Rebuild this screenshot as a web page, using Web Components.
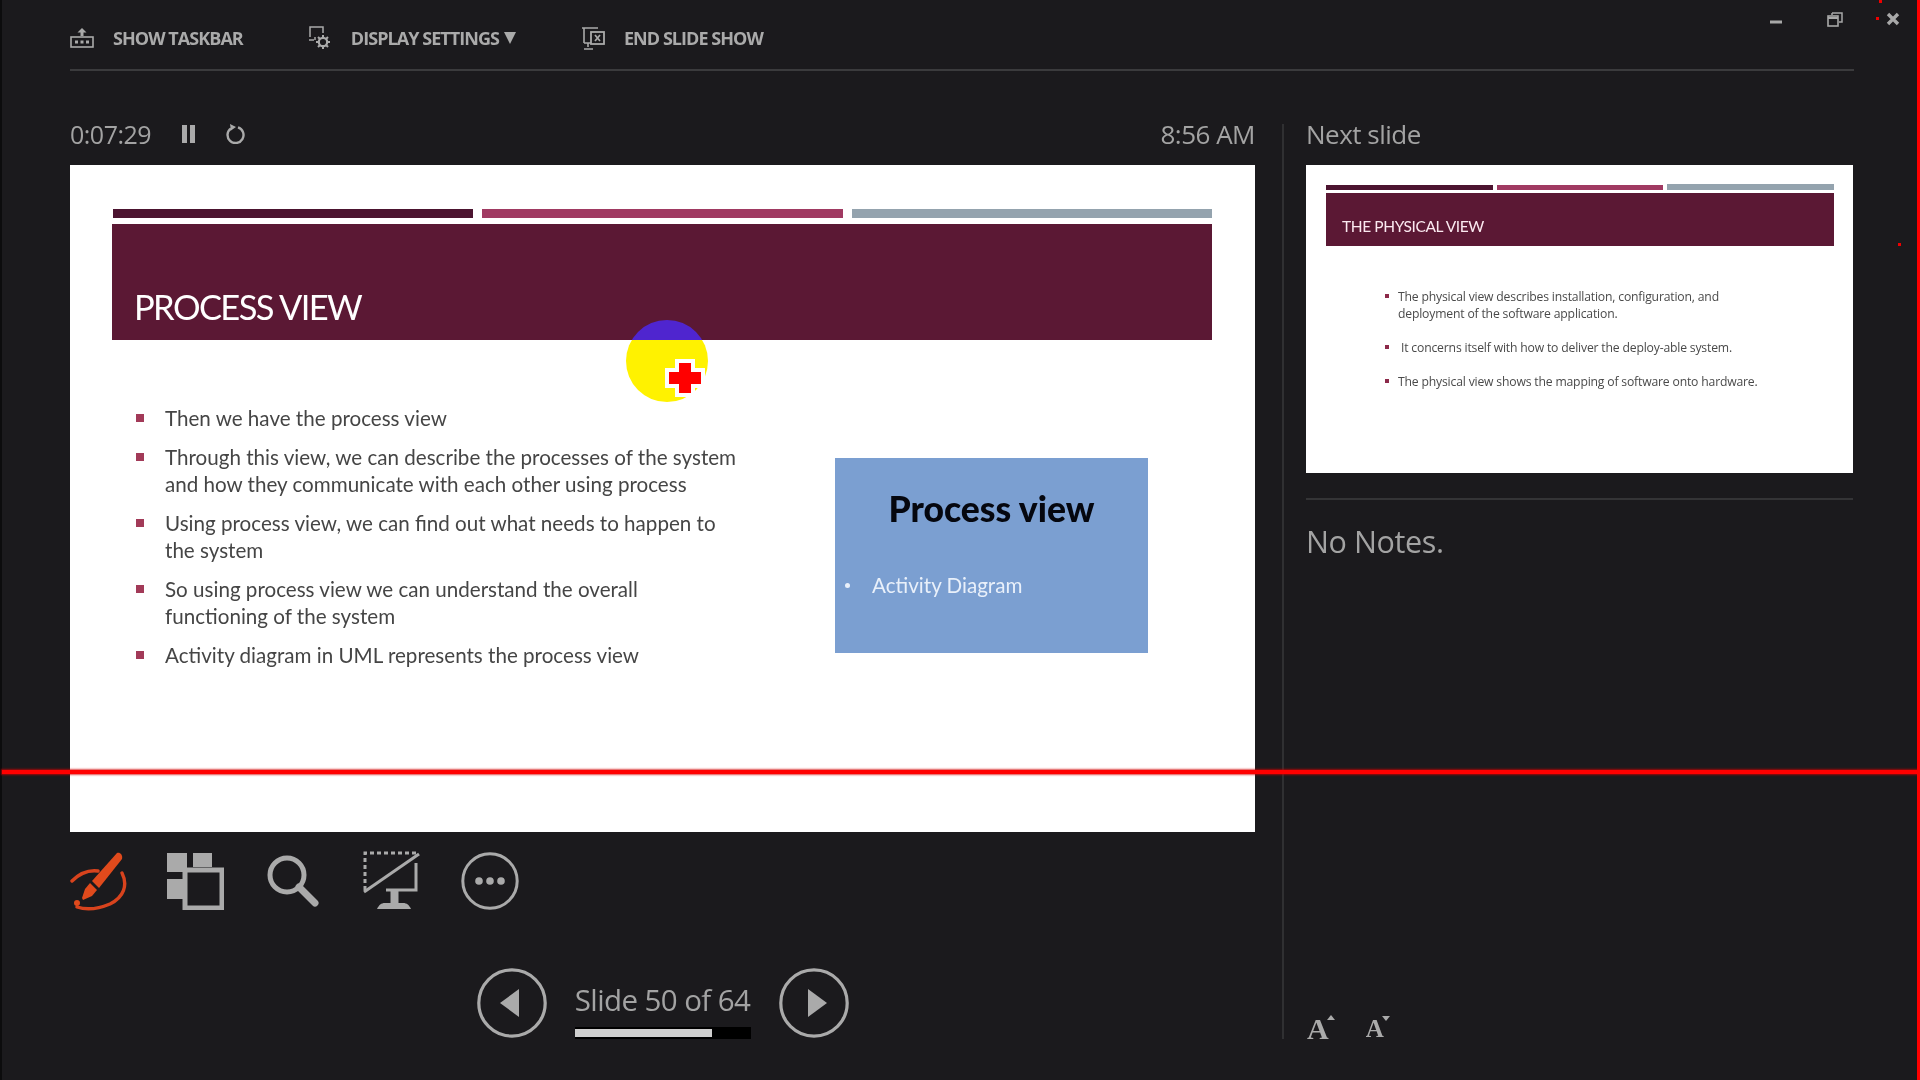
<!DOCTYPE html>
<html>
<head>
<meta charset="utf-8">
<title>Presenter view</title>
<style>
html,body{margin:0;padding:0;background:#1b1a1d;}
body{width:1920px;height:1080px;overflow:hidden;font-family:"Open Sans","Liberation Sans",sans-serif;}
</style>
</head>
<body>
<presenter-app></presenter-app>

<script>
const ICONS = {
    taskbar:`<svg width="24" height="20" viewBox="0 0 24 20" fill="none" stroke="#aaa"><path d="M12 0l-4.5 4.5h9z" fill="#aaa" stroke="none"/><rect x="10.5" y="4" width="3" height="4" fill="#aaa" stroke="none"/><rect x="1" y="9" width="22" height="10" stroke-width="1.6"/><path d="M5 14h3M10.5 14h3M16 14h3" stroke-width="3"/></svg>`,
    display:`<svg width="24" height="24" viewBox="0 0 24 24" fill="none" stroke="#aaa" stroke-width="1.5"><path d="M2 11V1h13v6M1 14h5"/><path d="M7 11v3"/><circle cx="15" cy="16" r="4.2" stroke-width="2.2"/><path d="M15 9v3M15 20v3M8 16h3M19 16h3M10 11l2 2M18 19l2 2M20 11l-2 2M12 19l-2 2" stroke-width="2"/></svg>`,
    end:`<svg width="24" height="24" viewBox="0 0 24 24" fill="none" stroke="#aaa" stroke-width="1.6"><path d="M1 2h16M3 2v15M10 17H3M7 17v4M3 23h9"/><rect x="10" y="6" width="13" height="12" fill="#1b1a1d" stroke-width="1.8"/><path d="M14 9l5 6M19 9l-5 6" stroke-width="1.7"/></svg>`,
    pen:`<svg width="58" height="60" viewBox="0 0 58 60" fill="none"><path d="M2 30c8-8 18-11 26-10M52 22c6 12 2 24-12 31-12 5-24 6-33 3" stroke="#d8431d" stroke-width="3.4" stroke-linecap="round"/><path d="M47 2c3-1 6 2 5 6L29 37l-7-7z" fill="#e04a1c"/><path d="M20 32l7 7-5 6-9 4-1-2 3-9z" fill="#e04a1c"/><circle cx="7" cy="52" r="3" fill="#e04a1c"/></svg>`,
    grid:`<svg width="58" height="58" viewBox="0 0 58 58"><rect x="1" y="1" width="20" height="19" fill="#aaa"/><rect x="27" y="1" width="19" height="14" fill="#aaa"/><rect x="1" y="27" width="20" height="20" fill="#aaa"/><rect x="19" y="18" width="37" height="38" fill="#1b1a1d" stroke="#aaa" stroke-width="5"/></svg>`,
    search:`<svg width="54" height="54" viewBox="0 0 54 54" fill="none" stroke="#aaa"><circle cx="21" cy="21" r="17" stroke-width="5"/><path d="M33 33l16 16" stroke-width="7" stroke-linecap="round"/></svg>`,
    screen:`<svg width="60" height="60" viewBox="0 0 60 60" fill="none" stroke="#aaa"><path d="M3 39V2h52" stroke-width="3" stroke-dasharray="4 3"/><path d="M2 41L57 3" stroke-width="3"/><path d="M54 12v27H24" stroke-width="3"/><path d="M29 40h7v12h-7z" fill="#aaa"/><path d="M15 58c2-4 4-6 8-6h18c4 0 6 2 8 6z" fill="#aaa" stroke="none"/></svg>`,
    more:`<svg width="58" height="58" viewBox="0 0 58 58" fill="none"><circle cx="29" cy="29" r="27.2" stroke="#aaa" stroke-width="3"/><circle cx="18" cy="29" r="3.8" fill="#aaa"/><circle cx="29" cy="29" r="3.8" fill="#aaa"/><circle cx="40" cy="29" r="3.8" fill="#aaa"/></svg>`,
    prev:`<svg width="72" height="72" viewBox="0 0 72 72" fill="none"><circle cx="36" cy="36" r="33.2" stroke="#aaa" stroke-width="3.2"/><path d="M43 22v28L24 36z" fill="#aaa"/></svg>`,
    next:`<svg width="72" height="72" viewBox="0 0 72 72" fill="none"><circle cx="36" cy="36" r="33.2" stroke="#aaa" stroke-width="3.2"/><path d="M30 22v28l19-14z" fill="#aaa"/></svg>`,
    pause:`<svg width="14" height="18" viewBox="0 0 14 18"><rect x="0" y="0" width="5" height="18" fill="#aaa"/><rect x="8" y="0" width="5" height="18" fill="#aaa"/></svg>`,
    refresh:`<svg width="20" height="20" viewBox="0 0 20 20" fill="none"><path d="M6 4.4A8 8 0 1 0 13 3.4" stroke="#aaa" stroke-width="2.4"/><path d="M5 0l1 6.5 5-3.5z" fill="#aaa"/></svg>`
};

// toolbar entry: icon + caps label
class ToolItem extends HTMLElement {
    constructor() {
        super();
        const shadowRoot = this.attachShadow({ mode: 'open' });
        shadowRoot.innerHTML = `
        <style>
        :host{
            display:inline-flex;
            align-items:center;
            gap:19px;
            color:#aaa;
            font:700 18px "Open Sans",sans-serif;
            letter-spacing:-.95px;
            white-space:nowrap;
        }
        i{display:flex;width:24px;}
        .caret{width:0;height:0;border:6.5px solid transparent;border-top:12px solid #aaa;border-bottom:0;margin-left:-14px;}
        </style>
        <i>${ICONS[this.getAttribute('icon')]}</i><slot></slot>${this.hasAttribute('caret')?'<span class="caret"></span>':''}
        `
    }
}

class BigIcon extends HTMLElement {
    constructor() {
        super();
        const shadowRoot = this.attachShadow({ mode: 'open' });
        shadowRoot.innerHTML = `
        <style>:host{display:inline-flex;align-items:center;justify-content:center;}svg{display:block}</style>
        ${ICONS[this.getAttribute('icon')]}
        `
    }
}

// one bullet of a slide; marker colour and sizes come from custom properties
class SlideBullet extends HTMLElement {
    constructor() {
        super();
        const shadowRoot = this.attachShadow({ mode: 'open' });
        shadowRoot.innerHTML = `
        <style>
        :host{
            display:block;
            position:relative;
            padding-left:var(--indent,28px);
        }
        b{
            position:absolute;
            left:0;
            top:var(--mark-top,7px);
            width:var(--mark,8px);
            height:var(--mark,8px);
            background:var(--mark-color,#a23a58);
        }
        </style>
        <b></b><slot></slot>
        `
    }
}

class SlideBars extends HTMLElement {
    constructor() {
        super();
        const shadowRoot = this.attachShadow({ mode: 'open' });
        shadowRoot.innerHTML = `
        <style>
        :host{display:flex;gap:var(--bar-gap,9px);height:var(--bar-h,9px);margin-left:var(--bar-left,1px);}
        span{flex:1;}
        .a{background:#4c1430;}
        .b{background:#a03a62;}
        .c{background:#94a3ae;margin-top:var(--c-shift,0);}
        </style>
        <span class="a"></span><span class="b"></span><span class="c"></span>
        `
    }
}

class CurrentSlide extends HTMLElement {
    constructor() {
        super();
        const shadowRoot = this.attachShadow({ mode: 'open' });
        shadowRoot.innerHTML = `
        <style>
        :host{
            display:block;
            position:relative;
            width:1185px;
            height:667px;
            box-sizing:border-box;
            padding:44px 43px 0 42px;
            background:#fff;
            color:#454545;
            font-family:Lato,"Open Sans",sans-serif;
            overflow:hidden;
        }
        .band{
            height:116px;
            margin-top:6px;
            box-sizing:border-box;
            padding:0 0 0 22px;
            background:#5b1834;
            color:#fff;
            font-size:34.5px;
            letter-spacing:-1.6px;
            display:flex;
            align-items:flex-end;
        }
        .band span{line-height:1;padding-bottom:16px;}
        .main{display:flex;align-items:flex-start;}
        .list{
            width:723px;
            box-sizing:border-box;
            padding:65px 93px 0 24px;
            display:flex;
            flex-direction:column;
            gap:12px;
            font-size:20.6px;
            line-height:27px;
            --indent:29px;
            --mark-top:9px;
        }
        .box{
            width:313px;
            height:195px;
            margin-top:118px;
            box-sizing:border-box;
            background:#7b9fd1;
            padding:30px 0 0 0;
        }
        .box h3{
            margin:0;
            color:#05070f;
            font-size:35.5px;
            line-height:42px;
            font-weight:900;
            text-align:center;
        }
        .box p{
            margin:41px 0 0 10px;
            color:#e9f0fa;
            font-size:20.6px;
            line-height:28px;
            display:flex;
            gap:22px;
            align-items:center;
        }
        .box p::before{content:"";width:5px;height:5px;border-radius:50%;background:#e9f0fa;}
        .pointer{
            position:absolute;
            left:556px;
            top:155px;
            width:82px;
            height:82px;
            border-radius:50%;
            background:linear-gradient(#4f25cf 0 20px,#fff200 20px);
        }
        .cross{
            position:absolute;
            left:599px;
            top:198px;
            width:32px;
            height:30px;
            background:
              linear-gradient(#f00,#f00) 10px 0/12px 30px no-repeat,
              linear-gradient(#f00,#f00) 0 9px/32px 12px no-repeat;
        }
        .halo{
            position:absolute;
            left:595px;
            top:194px;
            width:40px;
            height:38px;
            background:
              linear-gradient(#fff,#fff) 10px 0/20px 38px no-repeat,
              linear-gradient(#fff,#fff) 0 9px/40px 20px no-repeat;
        }
        </style>
        <slide-bars></slide-bars>
        <div class="band"><span>PROCESS VIEW</span></div>
        <div class="main">
          <div class="list">
            <slide-bullet>Then we have the process view</slide-bullet>
            <slide-bullet>Through this view, we can describe the processes of the system and how they communicate with each other using process</slide-bullet>
            <slide-bullet>Using process view, we can find out what needs to happen to the system</slide-bullet>
            <slide-bullet>So using process view we can understand the overall functioning of the system</slide-bullet>
            <slide-bullet>Activity diagram in UML represents the process view</slide-bullet>
          </div>
          <div class="box">
            <h3>Process view</h3>
            <p>Activity Diagram</p>
          </div>
        </div>
        <div class="pointer"></div>
        <div class="halo"></div>
        <div class="cross"></div>
        `
    }
}

class NextSlide extends HTMLElement {
    constructor() {
        super();
        const shadowRoot = this.attachShadow({ mode: 'open' });
        shadowRoot.innerHTML = `
        <style>
        :host{
            display:block;
            width:547px;
            height:308px;
            box-sizing:border-box;
            padding:20px 19px 0 20px;
            background:#fff;
            color:#4a4a4a;
            font-family:"Open Sans",sans-serif;
            --bar-gap:4px;
            --bar-h:5px;
            --bar-left:0;
            --c-shift:-1px;
        }
        .band{
            height:53px;
            margin-top:3px;
            box-sizing:border-box;
            padding:25px 0 0 16px;
            background:#5b1834;
            color:#fbe9f0;
            font:15.5px/17px Lato,sans-serif;
            letter-spacing:-.4px;
        }
        .list{
            padding:42px 0 0 59px;
            width:385px;
            font-size:12.2px;
            line-height:17px;
            letter-spacing:-.18px;
            display:flex;
            flex-direction:column;
            gap:17px;
            --indent:13px;
            --mark:4px;
            --mark-top:6px;
            --mark-color:#8c2a4a;
        }
        </style>
        <slide-bars></slide-bars>
        <div class="band">THE PHYSICAL VIEW</div>
        <div class="list">
            <slide-bullet>The physical view describes installation, configuration, and deployment of the software application.</slide-bullet>
            <slide-bullet>&nbsp;It concerns itself with how to deliver the deploy-able system.</slide-bullet>
            <slide-bullet>The physical view shows the mapping of software onto hardware.</slide-bullet>
        </div>
        `
    }
}

class SlideNav extends HTMLElement {
    constructor() {
        super();
        const shadowRoot = this.attachShadow({ mode: 'open' });
        shadowRoot.innerHTML = `
        <style>
        :host{display:flex;align-items:center;justify-content:center;gap:27px;color:#a3a3a3;}
        .mid{width:176px;display:flex;flex-direction:column;align-items:center;margin-top:17px;}
        .txt{font:400 29.5px/38px "Open Sans",sans-serif;letter-spacing:-.6px;white-space:nowrap;margin-top:-3px;}
        .track{width:176px;height:12px;background:#000;margin-top:8px;box-sizing:border-box;padding:2px 0;}
        .fill{width:137px;height:8px;background:#cfcfcf;}
        </style>
        <big-icon icon="prev"></big-icon>
        <div class="mid">
          <div class="txt">Slide 50 of 64</div>
          <div class="track"><div class="fill"></div></div>
        </div>
        <big-icon icon="next"></big-icon>
        `
    }
}

class FontButton extends HTMLElement {
    constructor() {
        super();
        const shadowRoot = this.attachShadow({ mode: 'open' });
        const up = this.hasAttribute('up');
        shadowRoot.innerHTML = `
        <style>
        :host{
            display:inline-flex;
            align-items:flex-start;
            color:#aaa;
            font:bold ${up?30:25}px/30px "Liberation Serif",serif;
        }
        i{width:0;height:0;border:4px solid transparent;margin-top:${up?1:2}px;margin-left:-2px;}
        i.up{border-top:0;border-bottom:5px solid #aaa;}
        i.down{border-bottom:0;border-top:5px solid #aaa;}
        </style>
        A<i class="${up?'up':'down'}"></i>
        `
    }
}

class PresenterApp extends HTMLElement {
    constructor() {
        super();
        const shadowRoot = this.attachShadow({ mode: 'open' });
        shadowRoot.innerHTML = `
        <style>
        :host{
            display:block;
            position:relative;
            width:1920px;
            height:1080px;
            box-sizing:border-box;
            padding:0 66px 0 70px;
            background:#1b1a1d;
            color:#a3a3a3;
            font-family:"Open Sans",sans-serif;
            overflow:hidden;
            filter:blur(.4px);
        }
        .toolbar{
            height:71px;
            box-sizing:border-box;
            border-bottom:2px solid #3b3b3d;
            display:flex;
            align-items:center;
            gap:65px;
            padding-top:6px;
        }
        .panes{display:grid;grid-template-columns:1185px 547px;column-gap:51px;position:relative;}
        .panes::before{
            content:"";
            position:absolute;
            left:1212px;
            top:53px;
            bottom:0;
            width:2px;
            background:#303032;
        }
        .head{
            height:94px;
            box-sizing:border-box;
            padding-top:32px;
            display:flex;
            align-items:center;
            font-size:26px;
            line-height:34px;
            letter-spacing:-.5px;
        }
        .timer{font-size:25px;}
        .head big-icon:first-of-type{margin-left:31px;}
        .head big-icon+big-icon{margin-left:29px;}
        .clock{margin-left:auto;}
        .tools{display:flex;gap:38.5px;height:60px;margin-top:19px;align-items:center;}
        .tools big-icon{width:60px;}
        .tools big-icon:first-child{justify-content:flex-start;margin-right:-4px;}
        slide-nav{margin-top:56px;width:1185px;}
        .rule{height:2px;background:#343436;margin-top:25px;}
        .notes{font-size:30.5px;line-height:40px;letter-spacing:-.4px;margin-top:21px;}
        .right{display:flex;flex-direction:column;height:968px;}
        .fonts{margin-top:auto;display:flex;gap:31px;margin-left:1px;margin-bottom:-5px;}
        .redline{position:absolute;left:2px;right:0;top:770px;height:4px;background:#f00;box-shadow:0 0 2px 1px rgba(210,0,0,.7);}
        .redside{position:absolute;right:0;top:0;bottom:0;width:3px;background:#f00;}
        .dot{position:absolute;width:3px;height:3px;background:#e00;}
        .edge{position:absolute;left:0;top:0;bottom:0;width:2px;background:#0c0c0d;}
        </style>
        <div class="toolbar">
          <tool-item icon="taskbar">SHOW TASKBAR</tool-item>
          <tool-item icon="display" caret>DISPLAY SETTINGS</tool-item>
          <tool-item icon="end">END SLIDE SHOW</tool-item>
        </div>
        <div class="panes">
          <div>
            <div class="head">
              <span class="timer">0:07:29</span>
              <big-icon icon="pause"></big-icon>
              <big-icon icon="refresh"></big-icon>
              <span class="clock">8:56 AM</span>
            </div>
            <current-slide></current-slide>
            <div class="tools">
              <big-icon icon="pen"></big-icon>
              <big-icon icon="grid"></big-icon>
              <big-icon icon="search"></big-icon>
              <big-icon icon="screen"></big-icon>
              <big-icon icon="more"></big-icon>
            </div>
            <slide-nav></slide-nav>
          </div>
          <div class="right">
            <div class="head"><span>Next slide</span></div>
            <next-slide></next-slide>
            <div class="rule"></div>
            <div class="notes">No Notes.</div>
            <div class="fonts">
              <font-button up></font-button>
              <font-button></font-button>
            </div>
          </div>
        </div>
        <svg style="position:absolute;left:1770px;top:8px" width="135" height="22" viewBox="0 0 135 22" fill="none" stroke="#a8a8a8">
          <path d="M0 14h12" stroke-width="3"/>
          <path d="M62 5h10v9h-3M62 5v2" stroke-width="1.5"/>
          <rect x="58" y="8" width="10" height="10" stroke-width="1.6"/>
          <path d="M58 10h10" stroke-width="2"/>
          <path d="M118 6l10 10M128 6l-10 10" stroke-width="3.4"/>
        </svg>
        <div class="edge"></div>
        <div class="redline"></div>
        <div class="redside"></div>
        <span class="dot" style="left:1876px;top:17px"></span>
        <span class="dot" style="left:1879px;top:0"></span>
        <span class="dot" style="left:1898px;top:243px"></span>
        `
    }
}

customElements.define('tool-item', ToolItem);
customElements.define('big-icon', BigIcon);
customElements.define('slide-bullet', SlideBullet);
customElements.define('slide-bars', SlideBars);
customElements.define('current-slide', CurrentSlide);
customElements.define('next-slide', NextSlide);
customElements.define('slide-nav', SlideNav);
customElements.define('font-button', FontButton);
customElements.define('presenter-app', PresenterApp);
</script>
</body>
</html>
